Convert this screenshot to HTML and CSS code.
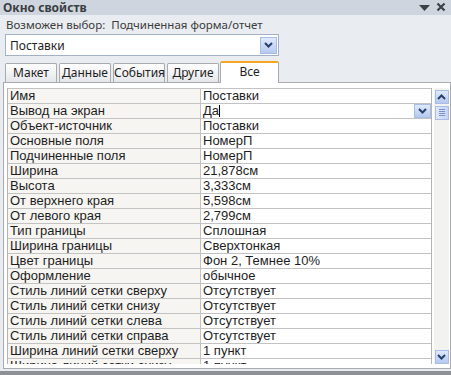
FILE: index.html
```html
<!DOCTYPE html>
<html lang="ru">
<head>
    <meta charset="UTF-8">
    <title>Окно свойств</title>
    <link rel="stylesheet" href="styles.css">
</head>
<body>
    <div class="window">
        <div class="titlebar">
            <span class="title">Окно свойств</span>
            <svg class="icon" width="28" height="11" viewBox="0 0 28 11">
                <polygon points="0,3 11,3 5.5,9" fill="#3c4047"/>
                <path d="M18.5 1.5l7 7M25.5 1.5l-7 7" stroke="#3c4047" stroke-width="2.2"/>
            </svg>
        </div>
        <div class="hint">Возможен выбор:&nbsp; Подчиненная форма/отчет</div>
        <div class="combo">
            <span class="combo-text">Поставки</span>
            <span class="drop-btn">
                <svg width="9" height="6" viewBox="0 0 9 6"><path d="M1 1l3.5 3.5L8 1" stroke="#27406b" stroke-width="2" fill="none"/></svg>
            </span>
        </div>
        <div class="tabs">
            <div class="tab">Макет</div>
            <div class="tab">Данные</div>
            <div class="tab">События</div>
            <div class="tab">Другие</div>
            <div class="tab active">Все</div>
        </div>
        <div class="panel">
            <div class="grid">
                <div class="rows">
                    <div class="row"><div class="name">Имя</div><div class="value">Поставки</div></div>
                    <div class="row"><div class="name">Вывод на экран</div><div class="value">Да<span class="caret"></span>
                        <span class="drop-btn small"><svg width="9" height="6" viewBox="0 0 9 6"><path d="M1 1l3.5 3.5L8 1" stroke="#27406b" stroke-width="2" fill="none"/></svg></span></div></div>
                    <div class="row"><div class="name">Объект-источник</div><div class="value">Поставки</div></div>
                    <div class="row"><div class="name">Основные поля</div><div class="value">НомерП</div></div>
                    <div class="row"><div class="name">Подчиненные поля</div><div class="value">НомерП</div></div>
                    <div class="row"><div class="name">Ширина</div><div class="value">21,878см</div></div>
                    <div class="row"><div class="name">Высота</div><div class="value">3,333см</div></div>
                    <div class="row"><div class="name">От верхнего края</div><div class="value">5,598см</div></div>
                    <div class="row"><div class="name">От левого края</div><div class="value">2,799см</div></div>
                    <div class="row"><div class="name">Тип границы</div><div class="value">Сплошная</div></div>
                    <div class="row"><div class="name">Ширина границы</div><div class="value">Сверхтонкая</div></div>
                    <div class="row"><div class="name">Цвет границы</div><div class="value">Фон 2, Темнее 10%</div></div>
                    <div class="row"><div class="name">Оформление</div><div class="value">обычное</div></div>
                    <div class="row"><div class="name">Стиль линий сетки сверху</div><div class="value">Отсутствует</div></div>
                    <div class="row"><div class="name">Стиль линий сетки снизу</div><div class="value">Отсутствует</div></div>
                    <div class="row"><div class="name">Стиль линий сетки слева</div><div class="value">Отсутствует</div></div>
                    <div class="row"><div class="name">Стиль линий сетки справа</div><div class="value">Отсутствует</div></div>
                    <div class="row"><div class="name">Ширина линий сетки сверху</div><div class="value">1 пункт</div></div>
                    <div class="row"><div class="name">Ширина линий сетки снизу</div><div class="value">1 пункт</div></div>
                </div>
                <div class="scrollbar">
                    <span class="sb-btn"><svg width="9" height="6" viewBox="0 0 9 6"><path d="M1 5l3.5-3.5L8 5" stroke="#27406b" stroke-width="2" fill="none"/></svg></span>
                    <span class="sb-thumb"><span></span><span></span><span></span><span></span></span>
                    <span class="sb-space"></span>
                    <span class="sb-btn"><svg width="9" height="6" viewBox="0 0 9 6"><path d="M1 1l3.5 3.5L8 1" stroke="#27406b" stroke-width="2" fill="none"/></svg></span>
                </div>
            </div>
        </div>
        <div class="bottom-bar"></div>
    </div>
</body>
</html>
```

FILE: styles.css
```css
body {
    margin: 0;
    font-family: 'Noto Sans', sans-serif;
    font-size: 11px;
    color: #1e1e1e;
    background-color: #e9ecf1;
}
.window {
    width: 451px;
    height: 375px;
    overflow: hidden;
    display: flex;
    flex-direction: column;
}
.titlebar {
    height: 15px;
    background-color: #cfd5de;
    display: flex;
    align-items: center;
    justify-content: space-between;
    padding: 0 4px 0 3px;
}
.title {
    font-weight: bold;
    font-size: 12px;
    color: #3a3d42;
}
.icon {
    display: block;
    flex-shrink: 0;
}
.hint {
    padding: 2px 6px 0;
    height: 17px;
    color: #3c3c3c;
    font-size: 11.5px;
}
.combo {
    margin-left: 5px;
    width: 267px;
    height: 21px;
    background-color: white;
    border: 1px solid #a4b1c4;
    display: flex;
    align-items: center;
    justify-content: space-between;
    padding: 0 1px 0 4px;
}
.combo-text {
    font-size: 12px;
}
.drop-btn {
    width: 15px;
    height: 15px;
    background: linear-gradient(#dfe9fb, #b5c8ef);
    border: 1px solid #a7bde6;
    display: flex;
    align-items: center;
    justify-content: center;
}
.drop-btn.small {
    margin-left: auto;
    height: 12px;
}
.tabs {
    display: flex;
    margin-top: 4px;
    padding-left: 5px;
    height: 22px;
    align-items: flex-end;
    gap: 2px;
}
.tab {
    height: 18px;
    width: 50px;
    text-align: center;
    line-height: 18px;
    border: 1px solid #a8aaae;
    border-bottom: none;
    background: linear-gradient(#ffffff, #e4e6ea);
    border-radius: 2px 2px 0 0;
    font-size: 12px;
}
.tab.active {
    width: 57px;
    height: 20px;
    background: white;
    border-top: 2px solid #f5a623;
    margin-left: -1px;
    margin-bottom: -1px;
    position: relative;
}
.panel {
    margin-left: 3px;
    height: 285px;
    border: 1px solid #a8aaae;
    background-color: white;
    padding: 5px 0 0 3px;
}
.grid {
    display: flex;
    height: 276px;
    overflow: hidden;
}
.rows {
    width: 423px;
    border-left: 1px solid #b4b4b4;
    border-right: 1px solid #b4b4b4;
    font-family: 'Liberation Sans', Arial, sans-serif;
    font-size: 13px;
}
.row {
    display: flex;
    height: 14px;
    border-top: 1px solid #c3c3c3;
    line-height: 14px;
}
.name {
    width: 190px;
    padding-left: 2px;
    border-right: 1px solid #c3c3c3;
    background-color: #f6f5f2;
    white-space: nowrap;
}
.value {
    flex: 1;
    padding-left: 2px;
    display: flex;
    align-items: center;
    white-space: nowrap;
}
.caret {
    display: inline-block;
    width: 1px;
    height: 12px;
    background-color: black;
}
.scrollbar {
    width: 15px;
    margin-left: 2px;
    background-color: #f2f2ef;
    display: flex;
    flex-direction: column;
    align-items: center;
    padding-top: 2px;
    gap: 2px;
}
.sb-btn {
    width: 12px;
    height: 12px;
    background: linear-gradient(#dfe9fb, #b5c8ef);
    border: 1px solid #a7bde6;
    display: flex;
    align-items: center;
    justify-content: center;
}
.sb-thumb {
    width: 12px;
    height: 12px;
    background: linear-gradient(90deg, #dfe9fb, #c4d4f3);
    border: 1px solid #a7bde6;
    display: flex;
    flex-direction: column;
    align-items: center;
    justify-content: center;
    gap: 1px;
}
.sb-thumb span {
    width: 6px;
    height: 1px;
    background-color: #7c93c4;
}
.sb-space {
    flex: 1;
}
.bottom-bar {
    margin-top: 2px;
    height: 4px;
    background-color: #8e9196;
}
```
